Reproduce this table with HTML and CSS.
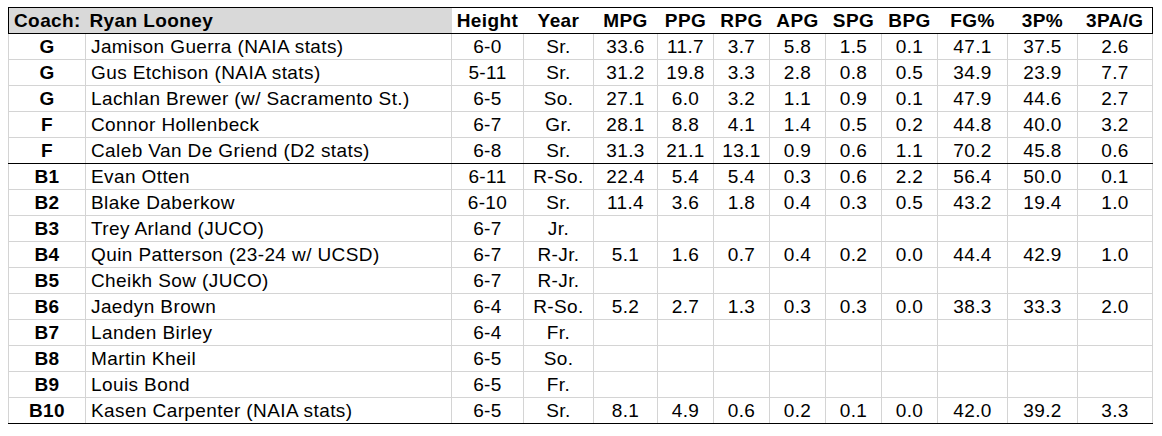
FILE: index.html
```html
<!DOCTYPE html>
<html>
<head>
<meta charset="utf-8">
<link rel="stylesheet" href="styles.css">
</head>
<body>
<table class="roster">
  <colgroup>
    <col class="c-pos"><col class="c-name"><col class="c-ht"><col class="c-yr">
    <col class="c-mpg"><col class="c-s"><col class="c-s"><col class="c-s"><col class="c-s"><col class="c-s">
    <col class="c-pct"><col class="c-pct"><col class="c-pa">
  </colgroup>
  <thead>
    <tr class="head">
      <th class="coach">Coach:</th>
      <th class="coach name">Ryan Looney</th>
      <th>Height</th><th>Year</th><th>MPG</th><th>PPG</th><th>RPG</th><th>APG</th><th>SPG</th><th>BPG</th><th>FG%</th><th>3P%</th><th>3PA/G</th>
    </tr>
  </thead>
  <tbody>
    <tr><td class="pos">G</td><td class="name">Jamison Guerra (NAIA stats)</td><td>6-0</td><td>Sr.</td><td>33.6</td><td>11.7</td><td>3.7</td><td>5.8</td><td>1.5</td><td>0.1</td><td>47.1</td><td>37.5</td><td>2.6</td></tr>
    <tr><td class="pos">G</td><td class="name">Gus Etchison (NAIA stats)</td><td>5-11</td><td>Sr.</td><td>31.2</td><td>19.8</td><td>3.3</td><td>2.8</td><td>0.8</td><td>0.5</td><td>34.9</td><td>23.9</td><td>7.7</td></tr>
    <tr><td class="pos">G</td><td class="name">Lachlan Brewer (w/ Sacramento St.)</td><td>6-5</td><td>So.</td><td>27.1</td><td>6.0</td><td>3.2</td><td>1.1</td><td>0.9</td><td>0.1</td><td>47.9</td><td>44.6</td><td>2.7</td></tr>
    <tr><td class="pos">F</td><td class="name">Connor Hollenbeck</td><td>6-7</td><td>Gr.</td><td>28.1</td><td>8.8</td><td>4.1</td><td>1.4</td><td>0.5</td><td>0.2</td><td>44.8</td><td>40.0</td><td>3.2</td></tr>
    <tr class="split"><td class="pos">F</td><td class="name">Caleb Van De Griend (D2 stats)</td><td>6-8</td><td>Sr.</td><td>31.3</td><td>21.1</td><td>13.1</td><td>0.9</td><td>0.6</td><td>1.1</td><td>70.2</td><td>45.8</td><td>0.6</td></tr>
    <tr><td class="pos">B1</td><td class="name">Evan Otten</td><td>6-11</td><td>R-So.</td><td>22.4</td><td>5.4</td><td>5.4</td><td>0.3</td><td>0.6</td><td>2.2</td><td>56.4</td><td>50.0</td><td>0.1</td></tr>
    <tr><td class="pos">B2</td><td class="name">Blake Daberkow</td><td>6-10</td><td>Sr.</td><td>11.4</td><td>3.6</td><td>1.8</td><td>0.4</td><td>0.3</td><td>0.5</td><td>43.2</td><td>19.4</td><td>1.0</td></tr>
    <tr><td class="pos">B3</td><td class="name">Trey Arland (JUCO)</td><td>6-7</td><td>Jr.</td><td></td><td></td><td></td><td></td><td></td><td></td><td></td><td></td><td></td></tr>
    <tr><td class="pos">B4</td><td class="name">Quin Patterson (23-24 w/ UCSD)</td><td>6-7</td><td>R-Jr.</td><td>5.1</td><td>1.6</td><td>0.7</td><td>0.4</td><td>0.2</td><td>0.0</td><td>44.4</td><td>42.9</td><td>1.0</td></tr>
    <tr><td class="pos">B5</td><td class="name">Cheikh Sow (JUCO)</td><td>6-7</td><td>R-Jr.</td><td></td><td></td><td></td><td></td><td></td><td></td><td></td><td></td><td></td></tr>
    <tr><td class="pos">B6</td><td class="name">Jaedyn Brown</td><td>6-4</td><td>R-So.</td><td>5.2</td><td>2.7</td><td>1.3</td><td>0.3</td><td>0.3</td><td>0.0</td><td>38.3</td><td>33.3</td><td>2.0</td></tr>
    <tr><td class="pos">B7</td><td class="name">Landen Birley</td><td>6-4</td><td>Fr.</td><td></td><td></td><td></td><td></td><td></td><td></td><td></td><td></td><td></td></tr>
    <tr><td class="pos">B8</td><td class="name">Martin Kheil</td><td>6-5</td><td>So.</td><td></td><td></td><td></td><td></td><td></td><td></td><td></td><td></td><td></td></tr>
    <tr><td class="pos">B9</td><td class="name">Louis Bond</td><td>6-5</td><td>Fr.</td><td></td><td></td><td></td><td></td><td></td><td></td><td></td><td></td><td></td></tr>
    <tr><td class="pos">B10</td><td class="name">Kasen Carpenter (NAIA stats)</td><td>6-5</td><td>Sr.</td><td>8.1</td><td>4.9</td><td>0.6</td><td>0.2</td><td>0.1</td><td>0.0</td><td>42.0</td><td>39.2</td><td>3.3</td></tr>
  </tbody>
</table>
</body>
</html>
```
FILE: styles.css
```css
html, body {
  margin: 0;
  padding: 0;
  background: #ffffff;
}

body {
  padding: 7px 0 0 8px;
  font-family: "Liberation Sans", Arial, sans-serif;
  font-size: 19px;
  letter-spacing: 0.4px;
  color: #000000;
}

.roster {
  border-collapse: collapse;
  table-layout: fixed;
  width: 1145px;
  border: 1px solid #000000;
}

.c-pos { width: 77px; }
.c-name { width: 366px; }
.c-ht { width: 72px; }
.c-yr { width: 70px; }
.c-mpg { width: 64px; }
.c-s { width: 56px; }
.c-pct { width: 70px; }
.c-pa { width: 75px; }

.roster th,
.roster td {
  height: 25px;
  padding: 0;
  text-align: center;
  white-space: nowrap;
  overflow: hidden;
  line-height: 21px;
}

.roster td {
  border: 1px solid #d4d4d4;
}

.roster th {
  font-weight: bold;
  border-bottom: 1px solid #000000;
  background: #ffffff;
}

.roster th.coach {
  background: #d9d9d9;
  text-align: left;
  padding-left: 5px;
}

.roster th.coach.name {
  padding-left: 4px;
}

.roster td.pos {
  font-weight: bold;
}

.roster td.name {
  text-align: left;
  padding-left: 5px;
}

.roster tr.split td {
  border-bottom: 1px solid #000000;
}

.roster tr:last-child td {
  border-bottom: 1px solid #000000;
}
```
